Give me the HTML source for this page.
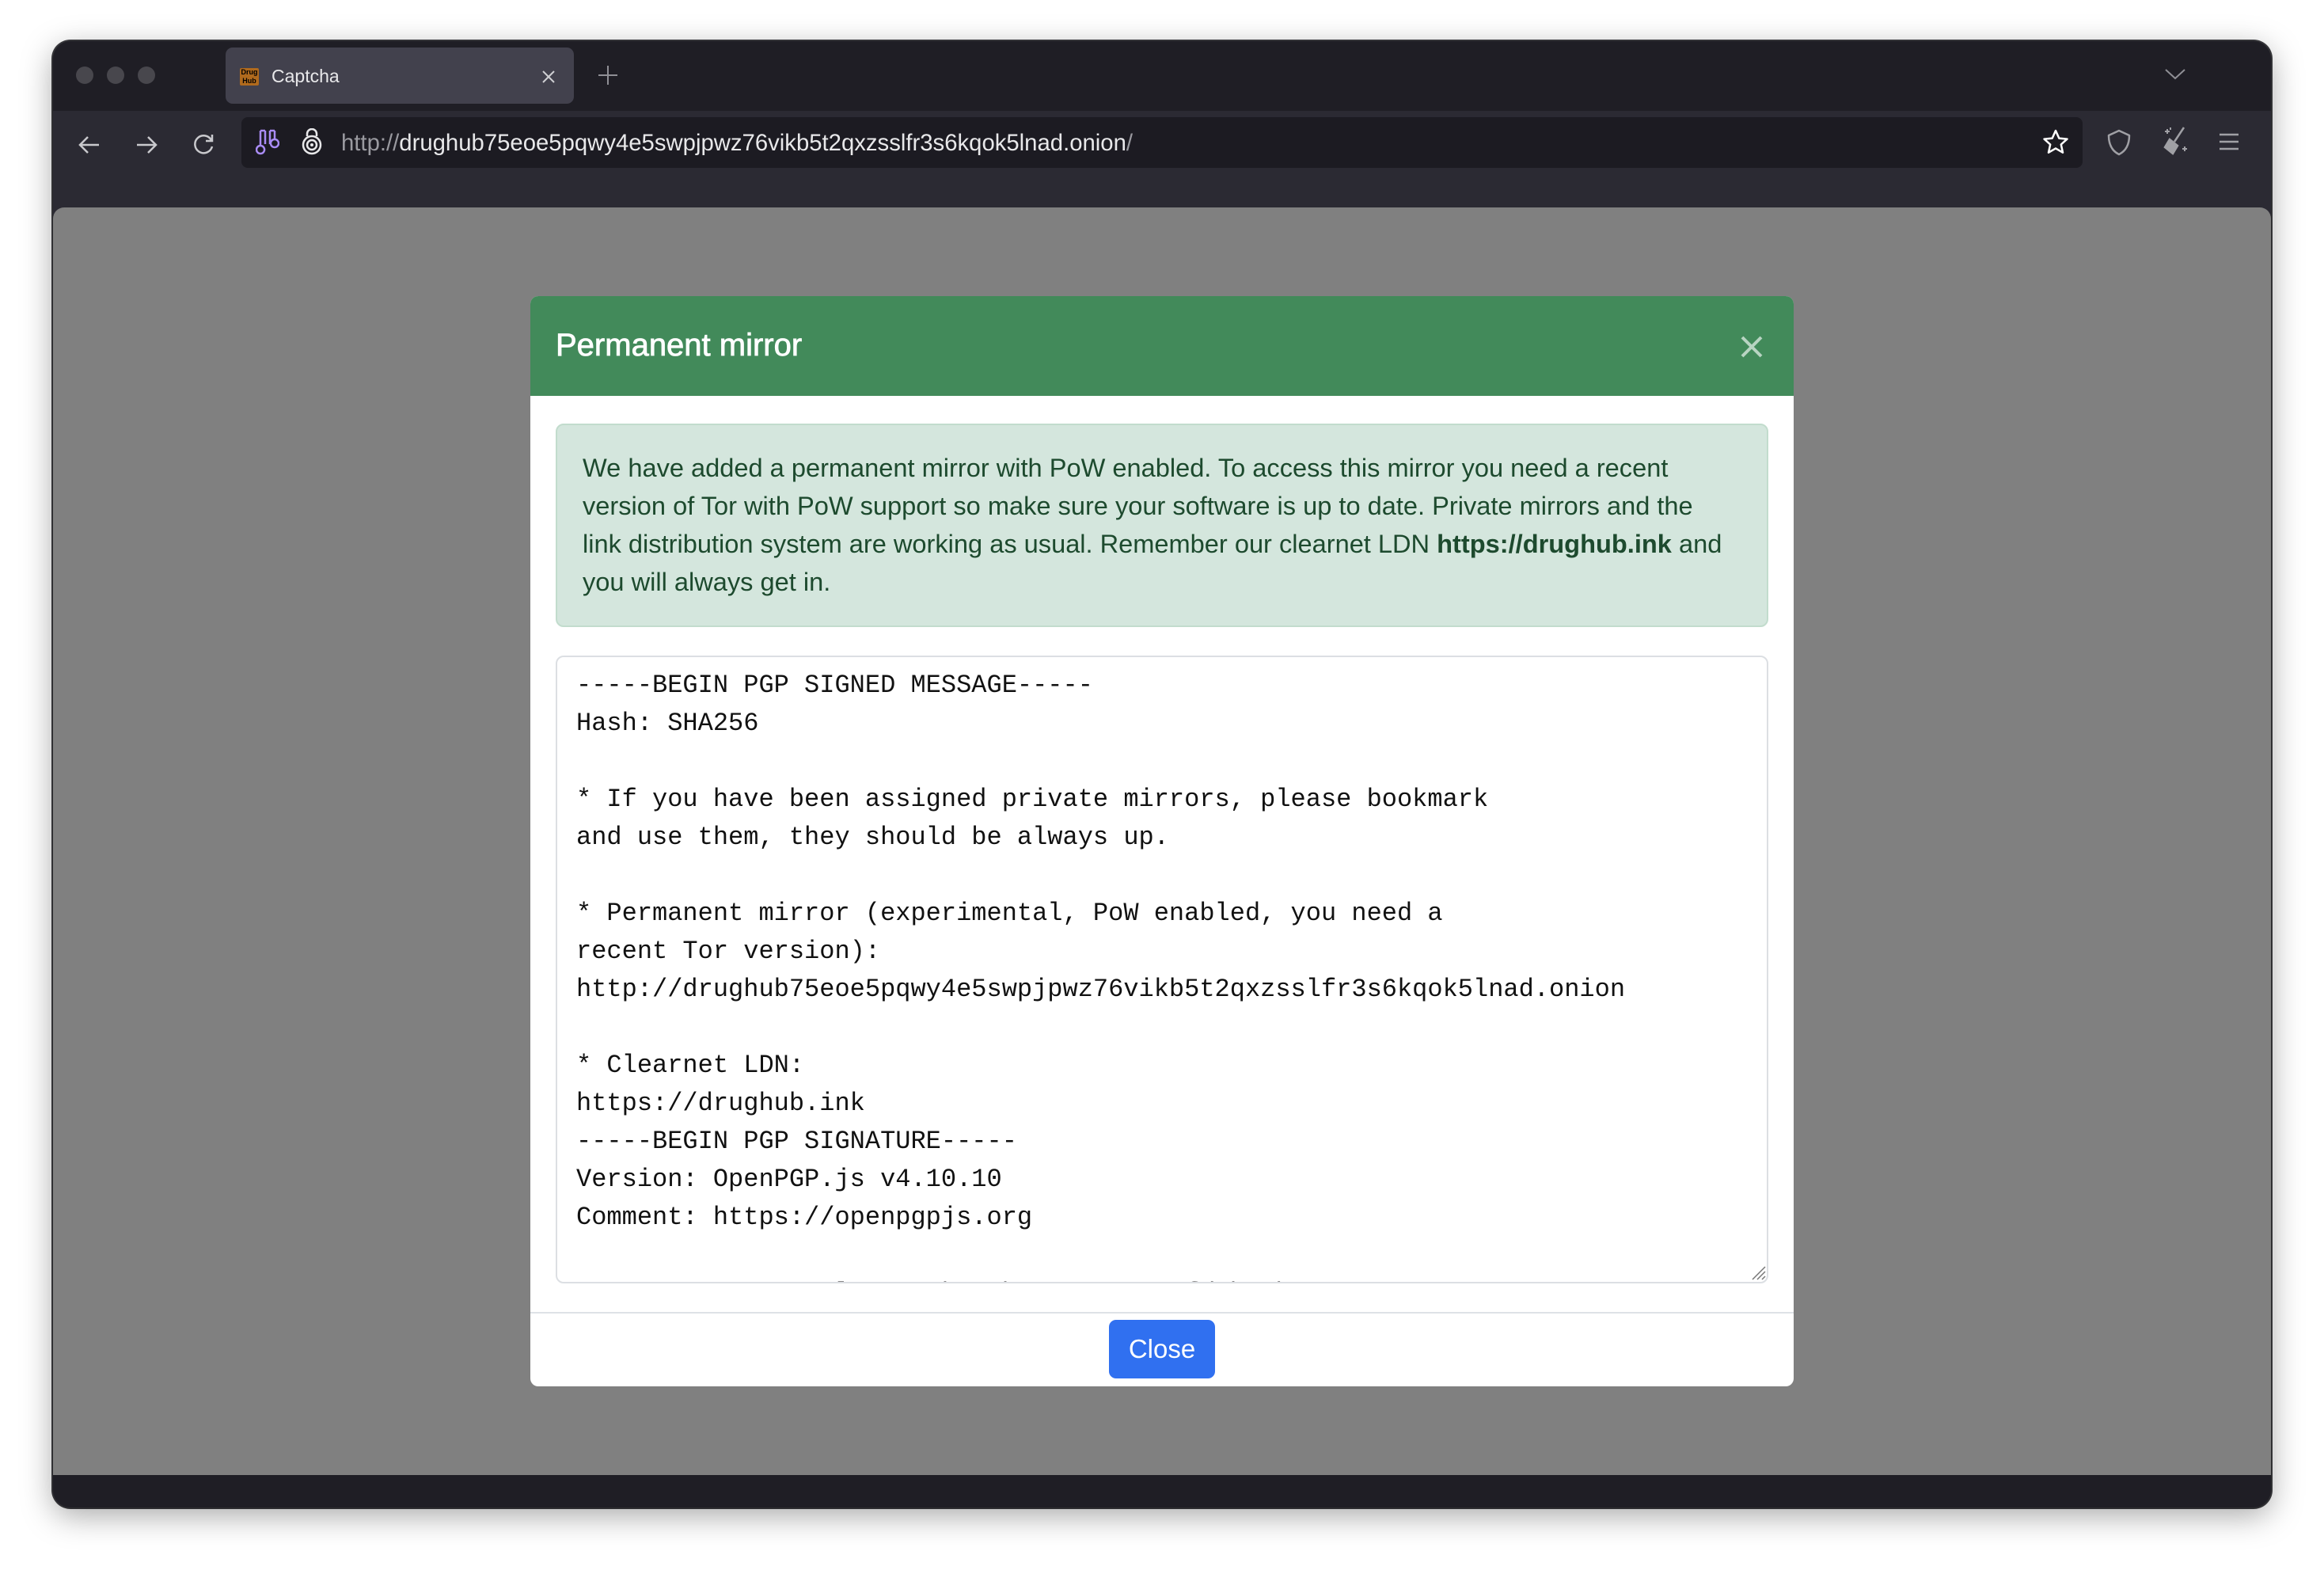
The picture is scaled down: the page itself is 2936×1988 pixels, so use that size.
<!DOCTYPE html>
<html><head><meta charset="utf-8"><style>
*{margin:0;padding:0;box-sizing:border-box}
body{width:2936px;height:1988px;background:#fff;position:relative;overflow:hidden;font-family:"Liberation Sans",sans-serif}
.win{position:absolute;left:67px;top:52px;width:2802px;height:1852px;border-radius:22px;background:#1f1e25;overflow:hidden;box-shadow:0 10px 40px rgba(0,0,0,.35),0 0 0 2px #3a3a3e}
.abs{position:absolute}
.dot{position:absolute;top:32px;width:22px;height:22px;border-radius:50%;background:#48474d}
.tab{left:218px;top:8px;width:440px;height:71px;background:#42414d;border-radius:9px}
.toolbar{left:0;top:88px;width:2802px;height:132px;background:#2b2a33}
.url{left:238px;top:96px;width:2326px;height:64px;background:#1c1b22;border-radius:8px}
.content{left:0;top:210px;width:2802px;height:1601px;background:#808080;border-radius:14px 14px 0 0}
.modal{left:603px;top:112px;width:1596px;height:1377px;background:#fff;border-radius:10px;overflow:hidden}
.hdr{left:0;top:0;width:1596px;height:126px;background:#428a5a}
.alert{left:32px;top:161px;width:1532px;height:257px;background:#d4e6dd;border:2px solid #c2dccd;border-radius:10px;color:#1d4a2e;font-size:32.6px;line-height:48px;padding:30px 32px;white-space:nowrap}
.ta{left:32px;top:454px;width:1532px;height:793px;border:2px solid #dcdfe3;border-radius:10px;overflow:hidden;font-family:"Liberation Mono",monospace;font-size:32px;line-height:48px;color:#111;padding:12px 24px;white-space:pre}
.btn{left:731px;top:1293px;width:134px;height:74px;background:#3070f0;border-radius:9px;color:#fff;font-size:33px;text-align:center;line-height:74px}
</style></head><body>
<div class="win">
 <div class="dot" style="left:29px"></div><div class="dot" style="left:68px"></div><div class="dot" style="left:107px"></div>
 <div class="abs tab">
  <div class="abs" style="left:18px;top:26px;width:24px;height:22px;background:#b06a1d;border-radius:2px;font-size:9px;color:#000;line-height:11px;text-align:center;font-weight:bold">Drug<br>Hub</div>
  <div class="abs" style="left:58px;top:23px;color:#e8e8ea;font-size:23px">Captcha</div>
  <svg class="abs" style="left:399px;top:28px" width="18" height="18" viewBox="0 0 18 18"><path d="M2 2L16 16M16 2L2 16" stroke="#cfcfd3" stroke-width="2"/></svg>
 </div>
 <svg class="abs" style="left:688px;top:30px" width="26" height="26" viewBox="0 0 26 26"><path d="M13 1V25M1 13H25" stroke="#8f8f95" stroke-width="2"/></svg>
 <svg class="abs" style="left:2668px;top:34px" width="26" height="16" viewBox="0 0 26 16"><path d="M1 2L13 13L25 2" stroke="#8f8f95" stroke-width="2" fill="none"/></svg>
 <div class="abs toolbar"></div>
 <svg class="abs" style="left:30px;top:115px" width="32" height="32" viewBox="0 0 32 32"><path d="M28 16H5M14 6L4 16L14 26" stroke="#c9c9cd" stroke-width="2.5" fill="none"/></svg>
 <svg class="abs" style="left:102px;top:115px" width="32" height="32" viewBox="0 0 32 32"><path d="M4 16H27M18 6L28 16L18 26" stroke="#c9c9cd" stroke-width="2.5" fill="none"/></svg>
 <svg class="abs" style="left:174px;top:115px" width="32" height="32" viewBox="0 0 32 32"><path d="M26 10A11 11 0 1 0 27 18M27 3V11H19" stroke="#c9c9cd" stroke-width="2.5" fill="none"/></svg>
 <div class="abs url"></div>
 <svg class="abs" style="left:256px;top:110px" width="30" height="36" viewBox="0 0 30 36"><path d="M6 3V22M6 22A5 5 0 1 0 6.1 22M24 3V14A5 5 0 1 1 23.9 14M6 3H12M18 3H24M12 3V20M18 3V20" stroke="#a98cf5" stroke-width="2.5" fill="none"/></svg>
 <svg class="abs" style="left:312px;top:110px" width="30" height="36" viewBox="0 0 30 36"><circle cx="15" cy="21" r="11" stroke="#e8e8ea" stroke-width="2.5" fill="none"/><circle cx="15" cy="21" r="6" stroke="#e8e8ea" stroke-width="2.5" fill="none"/><circle cx="15" cy="21" r="2" fill="#e8e8ea"/><path d="M9 10V7A6 6 0 0 1 21 7V10" stroke="#e8e8ea" stroke-width="2.5" fill="none"/></svg>
 <div class="abs" style="left:364px;top:112px;font-size:29.3px;color:#e8e8ea;white-space:nowrap"><span style="color:#9a9aa0">http://</span>drughub75eoe5pqwy4e5swpjpwz76vikb5t2qxzsslfr3s6kqok5lnad.onion<span style="color:#9a9aa0">/</span></div>
 <svg class="abs" style="left:2512px;top:110px" width="36" height="36" viewBox="0 0 36 36"><path d="M18 3L22.3 12.6L32.5 13.6L24.8 20.5L27 30.7L18 25.4L9 30.7L11.2 20.5L3.5 13.6L13.7 12.6Z" stroke="#fff" stroke-width="2.5" fill="none" stroke-linejoin="round"/></svg>
 <svg class="abs" style="left:2594px;top:110px" width="32" height="36" viewBox="0 0 32 36"><path d="M16 3L29 9C29 22 24 29 16 33C8 29 3 22 3 9Z" stroke="#a0a0a5" stroke-width="2.5" fill="none" stroke-linejoin="round"/></svg>
 <svg class="abs" style="left:2662px;top:106px" width="36" height="40" viewBox="0 0 36 40"><path d="M30 3L18 21M12 18L22 26L16 36L6 28Z" stroke="#a0a0a5" stroke-width="2.5" fill="#a0a0a5"/><path d="M6 8H12M9 5V11M28 30H34M31 27V33M13 3V6" stroke="#a0a0a5" stroke-width="2"/></svg>
 <svg class="abs" style="left:2736px;top:114px" width="26" height="26" viewBox="0 0 26 26"><path d="M1 4H25M1 13H25M1 22H25" stroke="#a0a0a5" stroke-width="2.5"/></svg>
 <div class="abs content">
  <div class="abs modal">
   <div class="abs hdr">
    <div class="abs" style="left:32px;top:40px;color:#fff;font-size:40px;-webkit-text-stroke:0.8px #fff">Permanent mirror</div>
    <svg class="abs" style="left:1529px;top:50px" width="28" height="28" viewBox="0 0 28 28"><path d="M2 2L26 26M26 2L2 26" stroke="#b8d4c2" stroke-width="4"/></svg>
   </div>
   <div class="abs alert">We have added a permanent mirror with PoW enabled. To access this mirror you need a recent<br>version of Tor with PoW support so make sure your software is up to date. Private mirrors and the<br>link distribution system are working as usual. Remember our clearnet LDN <b>https://drughub.ink</b> and<br>you will always get in.</div>
   <div class="abs ta">-----BEGIN PGP SIGNED MESSAGE-----
Hash: SHA256

* If you have been assigned private mirrors, please bookmark
and use them, they should be always up.

* Permanent mirror (experimental, PoW enabled, you need a
recent Tor version):
http://drughub75eoe5pqwy4e5swpjpwz76vikb5t2qxzsslfr3s6kqok5lnad.onion

* Clearnet LDN:
https://drughub.ink
-----BEGIN PGP SIGNATURE-----
Version: OpenPGP.js v4.10.10
Comment: https://openpgpjs.org

  wsBcBAEBCAAGBQJlYZ6ACgkQ4Rh3QT3qYZL0gwf/WbFDhsyV8eZu3o2
</div>
   <svg class="abs" style="left:1540px;top:1222px" width="22" height="22" viewBox="0 0 22 22"><path d="M20 4L4 20M20 10L10 20M20 16L16 20" stroke="#777" stroke-width="1.5"/></svg>
   <div class="abs" style="left:0;top:1283px;width:1596px;height:2px;background:#dee2e6"></div>
   <div class="abs btn">Close</div>
  </div>
 </div>
</div>
</body></html>
